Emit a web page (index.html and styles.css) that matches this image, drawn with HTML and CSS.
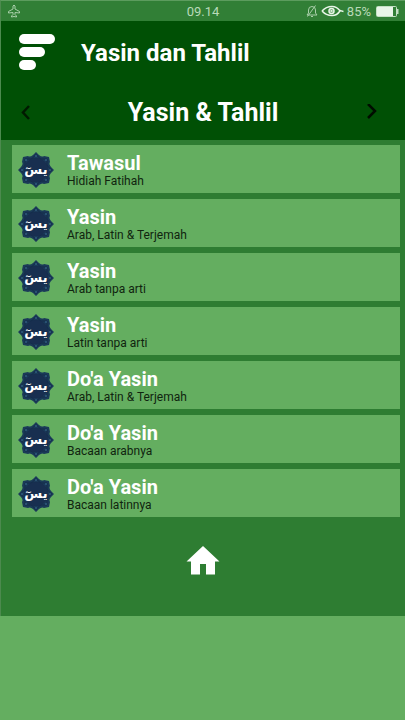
FILE: index.html
```html
<!DOCTYPE html>
<html lang="id">
<head>
    <meta charset="UTF-8">
    <meta name="viewport" content="width=device-width, initial-scale=1.0">
    <title>Yasin dan Tahlil</title>
    <link rel="stylesheet" href="styles.css">
</head>
<body>
    <!-- Shared emblem -->
    <svg class="sprite" aria-hidden="true">
        <symbol id="emblem" viewBox="0 0 36 36">
            <path fill="#1a3a58" d="M18 0 L21 3 Q24 5.500 26 4 L31 5 L32 10 Q30.500 12 33 15 L36 18 L33 21 Q30.500 24 32 26 L31 31 L26 32 Q24 30.500 21 33 L18 36 L15 33 Q12 30.500 10 32 L5 31 L4 26 Q5.500 24 3 21 L0 18 L3 15 Q5.500 12 4 10 L5 5 L10 4 Q12 5.500 15 3 Z"/>
            <g fill="none" stroke="#142b49" stroke-width="1">
                <path d="M18 2.500 L33.500 18 L18 33.500 L2.500 18 Z"/>
                <path d="M7 7 H29 V29 H7 Z"/>
            </g>
            <circle cx="18" cy="18" r="12" fill="#182f50"/>
            <g fill="#2f5b7c">
                <circle cx="18" cy="4" r="1"/><circle cx="18" cy="32" r="1"/>
                <circle cx="4" cy="18" r="1"/><circle cx="32" cy="18" r="1"/>
                <circle cx="8" cy="8" r="1"/><circle cx="28" cy="8" r="1"/>
                <circle cx="8" cy="28" r="1"/><circle cx="28" cy="28" r="1"/>
            </g>
            <text class="emblem-text" x="18" y="22" text-anchor="middle">يسٓ</text>
        </symbol>
    </svg>

    <div class="screen">
        <div class="status">
            <div class="status-left">
                <svg width="14" height="14" viewBox="0 0 14 14" fill="none" stroke="#a9cfaa" stroke-width="1" stroke-linejoin="round">
                    <path d="M6 2 Q7 0 8 2 V5 L12.500 7.500 V9 L8 8.500 V10.500 L9.500 12 V13 L7 12.500 L4.500 13 V12 L6 10.500 V8.500 L1.500 9 V7.500 L6 5 Z"/>
                </svg>
            </div>
            <div class="clock">09.14</div>
            <div class="status-right">
                <svg width="12" height="12" viewBox="0 0 12 12" fill="none" stroke="#a9cfaa" stroke-width="1">
                    <path d="M1 10 H11 L9.500 8 V5 Q9.500 1.500 6 1.500 Q2.500 1.500 2.500 5 V8 Z M5 11.500 H7 M1.500 11.500 L9.500 0.500"/>
                </svg>
                <svg width="23" height="12" viewBox="0 0 23 12" fill="none" stroke="#e8f5e8" stroke-width="1.500">
                    <path d="M1 6 Q5 1.500 11 1.500 Q16 1.500 19 6 Q16 10.500 11 10.500 Q5 10.500 1 6 M17 4 Q19 6 22.500 6.500"/>
                    <circle cx="10.500" cy="6" r="2.500"/>
                    <circle cx="10.500" cy="6" r="0.500"/>
                </svg>
                <span>85%</span>
                <svg class="battery" width="23" height="11" viewBox="0 0 23 11">
                    <rect x="0.500" y="0.500" width="20" height="10" rx="1" fill="none" stroke="#c4e0c4"/>
                    <rect x="1" y="1" width="16" height="9" fill="#e8f5e8"/>
                    <path d="M21 3 H22.500 V8 H21 Z" fill="#c4e0c4"/>
                </svg>
            </div>
        </div>

        <header class="header">
            <div class="app-bar">
                <button class="menu-btn" aria-label="Menu">
                    <svg width="38" height="38" viewBox="0 0 38 38" fill="#fff">
                        <rect x="1" y="0" width="36" height="10" rx="5"/>
                        <rect x="1" y="13" width="26" height="10" rx="5"/>
                        <rect x="1" y="26" width="17" height="10" rx="5"/>
                    </svg>
                </button>
                <h1>Yasin dan Tahlil</h1>
            </div>
            <div class="pager">
                <button aria-label="Sebelumnya">
                    <svg width="18" height="16" viewBox="0 0 18 16" fill="none" stroke="#001a00" stroke-width="2.500">
                        <path d="M8 2 L2 8.500 L8 15"/>
                    </svg>
                </button>
                <h2>Yasin &amp; Tahlil</h2>
                <button aria-label="Berikutnya">
                    <svg width="18" height="16" viewBox="0 0 18 16" fill="none" stroke="#000d00" stroke-width="2.500">
                        <path d="M1 0 L8 7 L1 14"/>
                    </svg>
                </button>
            </div>
        </header>

        <main class="content">
            <nav class="list">
                <a class="item" href="#tawasul">
                    <svg class="emblem" aria-hidden="true"><use href="#emblem"/></svg>
                    <span class="item-text"><strong>Tawasul</strong><small>Hidiah Fatihah</small></span>
                </a>
                <a class="item" href="#yasin-lengkap">
                    <svg class="emblem" aria-hidden="true"><use href="#emblem"/></svg>
                    <span class="item-text"><strong>Yasin</strong><small>Arab, Latin &amp; Terjemah</small></span>
                </a>
                <a class="item" href="#yasin-arab">
                    <svg class="emblem" aria-hidden="true"><use href="#emblem"/></svg>
                    <span class="item-text"><strong>Yasin</strong><small>Arab tanpa arti</small></span>
                </a>
                <a class="item" href="#yasin-latin">
                    <svg class="emblem" aria-hidden="true"><use href="#emblem"/></svg>
                    <span class="item-text"><strong>Yasin</strong><small>Latin tanpa arti</small></span>
                </a>
                <a class="item" href="#doa-lengkap">
                    <svg class="emblem" aria-hidden="true"><use href="#emblem"/></svg>
                    <span class="item-text"><strong>Do'a Yasin</strong><small>Arab, Latin &amp; Terjemah</small></span>
                </a>
                <a class="item" href="#doa-arab">
                    <svg class="emblem" aria-hidden="true"><use href="#emblem"/></svg>
                    <span class="item-text"><strong>Do'a Yasin</strong><small>Bacaan arabnya</small></span>
                </a>
                <a class="item" href="#doa-latin">
                    <svg class="emblem" aria-hidden="true"><use href="#emblem"/></svg>
                    <span class="item-text"><strong>Do'a Yasin</strong><small>Bacaan latinnya</small></span>
                </a>
            </nav>
            <a class="home" href="#home" aria-label="Beranda">
                <svg width="34" height="30" viewBox="0 0 34 30" fill="#fff">
                    <path d="M17 0 L33.500 15.500 H29 V28.500 H20 V18 H14 V28.500 H5 V15.500 H0.500 Z"/>
                </svg>
            </a>
        </main>
    </div>
</body>
</html>
```

FILE: styles.css
```css
* {
    box-sizing: border-box;
}
body {
    margin: 0;
    background: #64ae60;
    font-family: Roboto, 'Liberation Sans', sans-serif;
}
.sprite {
    display: none;
}
.screen {
    border-top: 1px solid #5c9c5e;
    border-left: 1px solid #4c8a4e;
}
.status {
    display: grid;
    grid-template-columns: 1fr auto 1fr;
    align-items: center;
    height: 20px;
    padding: 0 6px;
    background: #317f36;
    color: #b9dab9;
    font-size: 13px;
}
.status svg {
    display: block;
}
.status-right {
    display: flex;
    justify-content: flex-end;
    align-items: center;
    gap: 3px;
}
.battery {
    margin-left: 2px;
}
.header {
    background: #005005;
    color: #fff;
}
button {
    display: block;
    padding: 0;
    border: none;
    background: none;
    cursor: pointer;
}
button svg {
    display: block;
}
h1,
h2 {
    margin: 0;
    font-weight: bold;
}
.app-bar {
    display: flex;
    align-items: center;
    gap: 25px;
    height: 63px;
    padding: 0 17px;
}
h1 {
    font-size: 24px;
}
.pager {
    display: flex;
    justify-content: space-between;
    align-items: center;
    height: 56px;
    padding: 0 20px;
}
h2 {
    font-size: 25px;
}
.content {
    padding: 5px 0 40px;
    background: #2e7d32;
}
.list {
    display: flex;
    flex-direction: column;
    gap: 6px;
    margin: 0 5px 0 11px;
}
.item {
    display: flex;
    align-items: center;
    gap: 13px;
    height: 48px;
    padding: 2px 6px 0;
    background: #64ae60;
    color: #10240f;
    text-decoration: none;
}
.emblem {
    width: 36px;
    height: 36px;
}
.emblem-text {
    fill: #fff;
    font-family: 'DejaVu Sans', sans-serif;
    font-size: 13px;
    font-weight: bold;
}
.item-text {
    display: flex;
    flex-direction: column;
}
.item strong {
    color: #fff;
    font-size: 20px;
    line-height: 22px;
}
.item small {
    font-size: 12px;
    line-height: 15px;
}
.home {
    display: block;
    width: 34px;
    margin: 29px auto 0;
}
.home svg {
    display: block;
}
```
